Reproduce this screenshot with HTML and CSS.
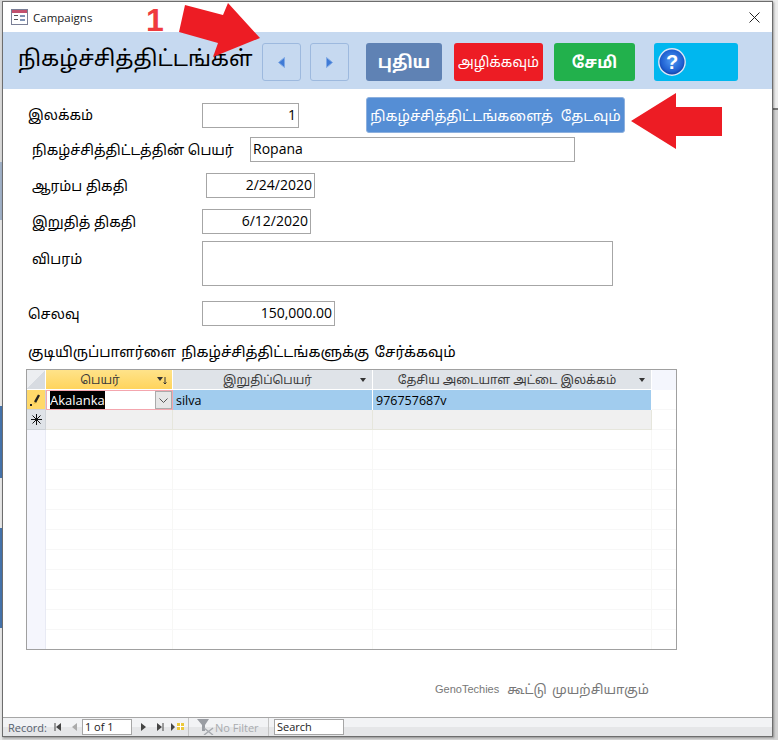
FILE: index.html
```html
<!DOCTYPE html>
<html lang="en">
<head>
    <meta charset="UTF-8">
    <meta name="viewport" content="width=device-width, initial-scale=1.0">
    <title>Campaigns</title>
    <link rel="stylesheet" href="styles.css">
</head>
<body>

    <div class="window">
        <!-- Title bar -->
        <div class="titlebar">
            <svg class="form-icon" width="17" height="16" viewBox="0 0 17 16">
                <rect x="0.5" y="0.5" width="16" height="15" fill="#fff" stroke="#7a7f96"/>
                <rect x="1" y="1" width="15" height="3" fill="#c2516e"/>
                <rect x="3" y="6" width="4" height="1" fill="#555"/>
                <rect x="3" y="10" width="4" height="1" fill="#555"/>
                <rect x="9" y="6" width="5" height="2" fill="#7f93b5"/>
                <rect x="9" y="10" width="5" height="2" fill="#7f93b5"/>
            </svg>
            <span class="titlebar-text">Campaigns</span>
            <svg class="close-icon" width="11" height="11" viewBox="0 0 11 11">
                <path d="M0.5 0.5L10.5 10.5M10.5 0.5L0.5 10.5" stroke="#222" stroke-width="1" fill="none"/>
            </svg>
        </div>

        <!-- Blue header band -->
        <div class="header">
            <h1 class="form-title">நிகழ்ச்சித்திட்டங்கள்</h1>
            <button class="nav-btn">
                <svg width="7" height="11" viewBox="0 0 7 11"><path d="M6.5 0.5V10.5L0.5 5.5Z" fill="#3f7bd6" stroke="#7fa8e4"/></svg>
            </button>
            <button class="nav-btn">
                <svg width="7" height="11" viewBox="0 0 7 11"><path d="M0.5 0.5V10.5L6.5 5.5Z" fill="#3f7bd6" stroke="#7fa8e4"/></svg>
            </button>
            <button class="cmd-btn btn-new">புதிய</button>
            <button class="cmd-btn btn-delete">அழிக்கவும்</button>
            <button class="cmd-btn btn-save">சேமி</button>
            <button class="cmd-btn btn-help">
                <svg width="28" height="28" viewBox="0 0 28 28">
                    <defs>
                        <radialGradient id="helpGlow" cx="50%" cy="45%" r="55%">
                            <stop offset="0%" stop-color="#4f9bf5"/>
                            <stop offset="75%" stop-color="#1f5fd0"/>
                            <stop offset="100%" stop-color="#123a9c"/>
                        </radialGradient>
                    </defs>
                    <circle cx="14" cy="14" r="13.2" fill="url(#helpGlow)" stroke="#dbe6f7" stroke-width="1.4"/>
                    <text x="14" y="21" class="help-mark" text-anchor="middle">?</text>
                </svg>
            </button>
        </div>

        <!-- Form fields -->
        <div class="form">
            <div class="row row-number">
                <label class="field-label label-number">இலக்கம்</label>
                <div class="field field-number">1</div>
                <button class="search-btn">நிகழ்ச்சித்திட்டங்களைத் தேடவும்</button>
            </div>
            <div class="row row-name">
                <label class="field-label label-name">நிகழ்ச்சித்திட்டத்தின் பெயர்</label>
                <div class="field field-name">Ropana</div>
            </div>
            <div class="row row-start">
                <label class="field-label label-start">ஆரம்ப திகதி</label>
                <div class="field field-date">2/24/2020</div>
            </div>
            <div class="row row-end">
                <label class="field-label label-end">இறுதித் திகதி</label>
                <div class="field field-date">6/12/2020</div>
            </div>
            <div class="row row-desc">
                <label class="field-label label-end">விபரம்</label>
                <div class="field field-desc"></div>
            </div>
            <div class="row row-cost">
                <label class="field-label label-cost">செலவு</label>
                <div class="field field-cost">150,000.00</div>
            </div>
            <h2 class="sub-heading">குடியிருப்பாளர்ளை நிகழ்ச்சித்திட்டங்களுக்கு சேர்க்கவும்</h2>
        </div>

        <!-- Subform datasheet -->
        <div class="sheet">
            <div class="sheet-row sheet-head">
                <div class="cell selector corner"></div>
                <div class="cell col-a head-active">பெயர்
                    <svg class="sort-mark" width="10" height="9" viewBox="0 0 10 9"><path d="M0 1H6L3 5Z" fill="#333"/><path d="M8 1V8M6.5 6.5L8 8L9.5 6.5" stroke="#333" fill="none"/></svg>
                </div>
                <div class="cell col-b">இறுதிப்பெயர்<span class="drop-mark"></span></div>
                <div class="cell col-c">தேசிய அடையாள அட்டை இலக்கம்<span class="drop-mark"></span></div>
                <div class="cell filler"></div>
            </div>
            <div class="sheet-row row-current">
                <div class="cell selector selector-edit">
                    <svg width="12" height="13" viewBox="0 0 12 13">
                        <path d="M4 8.5L8 1.5L10 2.5L6 10Z" fill="#222"/>
                        <path d="M4 8.5L6 10L3.5 11.5Z" fill="#e8c040"/>
                        <rect x="0" y="11" width="2" height="2" fill="#222"/>
                    </svg>
                </div>
                <div class="cell col-a cell-edit">
                    <span class="selected-text">Akalanka</span>
                    <span class="combo-btn">
                        <svg width="9" height="5" viewBox="0 0 9 5"><path d="M0.5 0.5L4.5 4.5L8.5 0.5" stroke="#555" fill="none"/></svg>
                    </span>
                </div>
                <div class="cell col-b">silva</div>
                <div class="cell col-c">976757687v</div>
                <div class="cell filler-plain"></div>
            </div>
            <div class="sheet-row row-new">
                <div class="cell selector">
                    <svg width="11" height="11" viewBox="0 0 11 11"><path d="M5.5 0V11M0 5.5H11M1.5 1.5L9.5 9.5M9.5 1.5L1.5 9.5" stroke="#111" stroke-width="1"/></svg>
                </div>
                <div class="cell col-a"></div>
                <div class="cell col-b"></div>
                <div class="cell col-c"></div>
                <div class="cell filler-plain"></div>
            </div>
            <div class="sheet-empty"></div>
        </div>

        <div class="credit">
            <span class="credit-name">GenoTechies</span>
            <span class="credit-tamil">கூட்டு முயற்சியாகும்</span>
        </div>

        <!-- Record navigation bar -->
        <div class="recordbar">
            <span class="rec-label">Record:</span>
            <svg class="rec-ico" width="7" height="8" viewBox="0 0 7 8"><path d="M1 0V8" stroke="#444"/><path d="M7 0V8L2 4Z" fill="#444"/></svg>
            <svg class="rec-ico rec-prev" width="5" height="8" viewBox="0 0 5 8"><path d="M5 0V8L0 4Z" fill="#aaa"/></svg>
            <span class="rec-box rec-current">1 of 1</span>
            <svg class="rec-ico rec-next" width="5" height="8" viewBox="0 0 5 8"><path d="M0 0V8L5 4Z" fill="#444"/></svg>
            <svg class="rec-ico rec-last" width="7" height="8" viewBox="0 0 7 8"><path d="M0 0V8L5 4Z" fill="#444"/><path d="M6 0V8" stroke="#444"/></svg>
            <svg class="rec-ico rec-new" width="13" height="8" viewBox="0 0 13 8"><path d="M0 0V8L4 4Z" fill="#444"/><rect x="6" y="0" width="7" height="7" fill="#ecc83a"/><path d="M9.5 0V7M6 3.5H13" stroke="#fff"/></svg>
            <span class="rec-sep"></span>
            <svg class="rec-filter" width="18" height="16" viewBox="0 0 18 16"><path d="M0 0H12L8 6V12H5V6Z" fill="#9a9da3"/><path d="M7 9L16 16M16 9L7 16" stroke="#a8abb0" stroke-width="1.5"/></svg>
            <span class="rec-nofilter">No Filter</span>
            <span class="rec-sep"></span>
            <span class="rec-box rec-search">Search</span>
        </div>

        <!-- Red annotation arrows -->
        <span class="note-number">1</span>
        <svg class="note-arrow note-arrow-top" width="90" height="60" viewBox="0 0 90 60">
            <path d="M9 5L47 15L52 3L84 38L37 57L42 43L3 32Z" fill="#ed1c24"/>
        </svg>
        <svg class="note-arrow note-arrow-side" width="95" height="60" viewBox="0 0 95 60">
            <path d="M2 28L47 0V14H93V43H47V56Z" fill="#ed1c24"/>
        </svg>
    </div>

</body>
</html>
```

FILE: styles.css
```css
/* Screen behind the form window: slivers of the Access app show at the edges */
body {
    margin: 0;
    width: 778px;
    height: 740px;
    overflow: hidden;
    background:
        linear-gradient(to bottom, #d8d8d8 162px, #9fb0c6 162px, #9fb0c6 220px, #e6e6e6 220px, #e6e6e6 406px, #4472aa 406px, #4472aa 478px, #e6e6e6 478px, #e6e6e6 528px, #4472aa 528px, #4472aa 628px, #e6e6e6 628px) left top / 2px 100% no-repeat,
        linear-gradient(to bottom, #ececec 108px, #777 108px, #777 110px, #d2d2d2 110px) right top / 5px 100% no-repeat,
        #d8d8d8;
    font-family: "Noto Sans", "Noto Sans Tamil", "DejaVu Sans", sans-serif;
    color: #000;
}

/* Access popup window */
.window {
    position: relative;
    box-sizing: border-box;
    width: 771px;
    height: 736px;
    margin: 1px 0 0 2px;
    background-color: #fff;
    border: 1px solid #6d6d6d;
    box-shadow: 1px 1px 2px rgba(0, 0, 0, 0.35);
}

.titlebar {
    display: flex;
    align-items: center;
    height: 30px;
    padding: 0 9px 0 8px;
}

.form-icon {
    margin-right: 5px;
}

.titlebar-text {
    font-family: "Open Sans", "Noto Sans", sans-serif;
    font-size: 11.5px;
    color: #222;
}

.close-icon {
    margin-left: auto;
    margin-right: 3px;
}

/* Blue band with title and command buttons */
.header {
    box-sizing: border-box;
    display: flex;
    align-items: center;
    height: 57px;
    background-color: #c6d9f0;
    padding: 3px 0 0 15px;
}

.form-title {
    width: 244px;
    margin: 0 0 8px 0;
    font-size: 22px;
    font-weight: normal;
    white-space: nowrap;
}

.nav-btn {
    display: flex;
    align-items: center;
    justify-content: center;
    width: 39px;
    height: 38px;
    margin-right: 9px;
    padding: 0;
    background-color: #c6d9f0;
    border: 1px solid #9db9de;
    border-radius: 3px;
}

.cmd-btn {
    height: 38px;
    padding: 0;
    border: none;
    border-radius: 3px;
    color: #fff;
    font-family: inherit;
    font-size: 16px;
    font-weight: bold;
}

.btn-new {
    width: 76px;
    margin-left: 8px;
    background-color: #5f82b4;
    font-size: 17px;
}

.btn-delete {
    width: 89px;
    margin-left: 12px;
    background-color: #ed1c24;
    font-size: 14px;
    font-weight: normal;
}

.btn-save {
    width: 81px;
    margin-left: 11px;
    background-color: #22b14c;
}

.btn-help {
    display: flex;
    align-items: center;
    width: 84px;
    margin-left: 19px;
    padding-left: 4px;
    background-color: #00b7ef;
}

.help-mark {
    font-family: "Liberation Sans", sans-serif;
    font-size: 20px;
    font-weight: bold;
    fill: #fff;
}

/* Form rows */
.form {
    padding-top: 8px;
    font-size: 14px;
}

.row {
    display: flex;
    align-items: center;
}

.field-label {
    white-space: nowrap;
    font-size: 14px;
}

.field {
    box-sizing: border-box;
    height: 25px;
    padding: 0 2px;
    border: 1px solid #a6a6a6;
    background-color: #fff;
    font-family: "Open Sans", "Noto Sans", sans-serif;
    font-size: 14px;
    line-height: 21px;
    text-align: right;
}

.row-number {
    height: 36px;
}

.label-number {
    width: 174px;
    margin-left: 25px;
}

.field-number {
    width: 97px;
}

.search-btn {
    width: 259px;
    height: 36px;
    margin-left: 67px;
    padding: 0;
    background-color: #558ed5;
    border: 1px solid #8db0de;
    border-radius: 3px;
    color: #fff;
    font-family: inherit;
    font-size: 14.5px;
    word-spacing: 4px;
    white-space: nowrap;
}

.row-name {
    height: 25px;
    margin-top: 4px;
}

.label-name {
    width: 218px;
    margin-left: 29px;
}

.field-name {
    width: 325px;
    text-align: left;
}

.row-start {
    height: 25px;
    margin-top: 11px;
}

.label-start {
    width: 174px;
    margin-left: 29px;
}

.field-date {
    width: 109px;
}

.row-end {
    height: 25px;
    margin-top: 11px;
}

.label-end {
    width: 170px;
    margin-left: 29px;
}

.row-desc {
    align-items: flex-start;
    margin-top: 7px;
}

.row-desc .label-end {
    line-height: 35px;
}

.field-desc {
    width: 411px;
    height: 45px;
}

.row-cost {
    height: 25px;
    margin-top: 15px;
}

.label-cost {
    width: 174px;
    margin-left: 25px;
}

.field-cost {
    width: 133px;
}

.sub-heading {
    margin: 12px 0 0 25px;
    font-size: 14.5px;
    font-weight: normal;
    word-spacing: 1.5px;
    line-height: 26px;
    white-space: nowrap;
}

/* Datasheet subform */
.sheet {
    box-sizing: border-box;
    display: flex;
    flex-direction: column;
    width: 651px;
    height: 281px;
    margin: 5px 0 0 23px;
    border: 1px solid #a0a0a0;
    background-color: #fff;
}

.sheet-row {
    display: flex;
    height: 20px;
    font-family: "Open Sans", "Noto Sans", sans-serif;
    font-size: 12.5px;
}

.cell {
    box-sizing: border-box;
    position: relative;
    display: flex;
    align-items: center;
    height: 100%;
    padding-left: 3px;
    border-right: 1px solid #eeeeee;
    border-bottom: 1px solid #eeeeee;
    white-space: nowrap;
}

.selector {
    width: 19px;
    justify-content: center;
    padding: 0;
    background-color: #dfe3e8;
    border-right: 1px solid #cfd3d8;
    border-bottom: 1px solid #cfd3d8;
}

.col-a {
    width: 127px;
}

.col-b {
    width: 200px;
}

.col-c {
    width: 279px;
}

.filler,
.filler-plain {
    flex: 1;
    border-right: none;
    border-bottom: 1px solid #f7f7f7;
}

.sheet-head .cell {
    justify-content: center;
    padding: 0 10px 0 0;
    background-color: #dfe3e8;
    border-right: 1px solid #fff;
    border-bottom: 1px solid #fff;
    font-family: "Noto Sans", "Noto Sans Tamil", "DejaVu Sans", sans-serif;
    font-size: 12px;
    color: #3a3a3a;
}

.sheet-head .head-active {
    background: linear-gradient(#ffe38a, #ffd45c);
    padding-right: 18px;
}

.sheet-head .corner {
    padding: 0;
    background: linear-gradient(135deg, #eceef1 50%, #d7dbe1 50%);
}

.sheet-head .filler {
    background-color: #f4f6fd;
    border: none;
}

.sort-mark {
    position: absolute;
    top: 6px;
    right: 5px;
}

.drop-mark {
    position: absolute;
    top: 8px;
    right: 6px;
    width: 0;
    height: 0;
    border-left: 3px solid transparent;
    border-right: 3px solid transparent;
    border-top: 4px solid #333;
}

.row-current .col-b,
.row-current .col-c {
    background-color: #a1ccee;
    border-right: 1px solid #fff;
    border-bottom: none;
}

.selector-edit {
    background-color: #ffd96a;
}

.cell-edit {
    justify-content: space-between;
    padding: 0 0 0 3px;
    background-color: #fff;
    border: 1px solid #f4a6ae;
    font-size: 13px;
}

.selected-text {
    background-color: #000;
    color: #fff;
}

.combo-btn {
    display: flex;
    align-items: center;
    justify-content: center;
    width: 17px;
    height: 100%;
    background-color: #e6e6e6;
    border: 1px solid #ababab;
    box-sizing: border-box;
}

.row-new .col-a,
.row-new .col-b,
.row-new .col-c {
    background-color: #f0f0f0;
    border-color: #e6e6dc;
}

/* Blank area below the new-record row, ruled every 20px */
.sheet-empty {
    flex: 1;
    background-color: #fff;
    background-image:
        linear-gradient(to right, #f5f6fd 18px, #e8eaf4 18px, #e8eaf4 19px, transparent 19px),
        repeating-linear-gradient(to bottom, transparent 0, transparent 19px, #f7f7f7 19px, #f7f7f7 20px),
        linear-gradient(to right, transparent 145px, #f7f7f5 145px, #f7f7f5 146px, transparent 146px, transparent 345px, #f7f7f5 345px, #f7f7f5 346px, transparent 346px, transparent 624px, #f7f7f5 624px, #f7f7f5 625px, transparent 625px);
}

.credit {
    display: flex;
    align-items: center;
    gap: 8px;
    height: 20px;
    margin: 29px 0 0 432px;
    color: #777;
    white-space: nowrap;
}

.credit-name {
    font-family: "Liberation Sans", sans-serif;
    font-size: 11px;
}

.credit-tamil {
    font-size: 13px;
    word-spacing: 2px;
}

/* Record navigation bar at the bottom */
.recordbar {
    position: absolute;
    left: 0;
    right: 0;
    bottom: 0;
    box-sizing: border-box;
    display: flex;
    align-items: center;
    height: 19px;
    padding-left: 5px;
    border-top: 1px solid #a6a6a6;
    background: linear-gradient(#f2f3f5 50%, #e5e6e8 50%);
    font-family: "Open Sans", "Noto Sans", sans-serif;
    font-size: 11px;
    color: #56606e;
}

.rec-ico {
    margin-left: 7px;
}

.rec-prev {
    margin-left: 11px;
}

.rec-next {
    margin-left: 9px;
}

.rec-last {
    margin-left: 11px;
}

.rec-new {
    margin-left: 7px;
}

.rec-box {
    box-sizing: border-box;
    height: 16px;
    padding-left: 2px;
    border: 1px solid #a6a6a6;
    background-color: #fff;
    color: #222;
    line-height: 14px;
}

.rec-current {
    width: 50px;
    margin-left: 5px;
}

.rec-sep {
    align-self: stretch;
    width: 1px;
    margin-left: 4px;
    background-color: #c4c4c4;
}

.rec-filter {
    margin-left: 8px;
}

.rec-nofilter {
    width: 49px;
    margin-left: 0;
    color: #a9abaf;
}

.rec-search {
    width: 70px;
    margin-left: 5px;
}

/* Annotations drawn over the form */
.note-arrow {
    position: absolute;
}

.note-arrow-top {
    left: 173px;
    top: -2px;
}

.note-arrow-side {
    left: 626px;
    top: 91px;
}

.note-number {
    position: absolute;
    left: 143px;
    top: 0;
    font-family: "Liberation Sans", sans-serif;
    font-size: 32px;
    font-weight: bold;
    color: #ef3b3f;
}
```
